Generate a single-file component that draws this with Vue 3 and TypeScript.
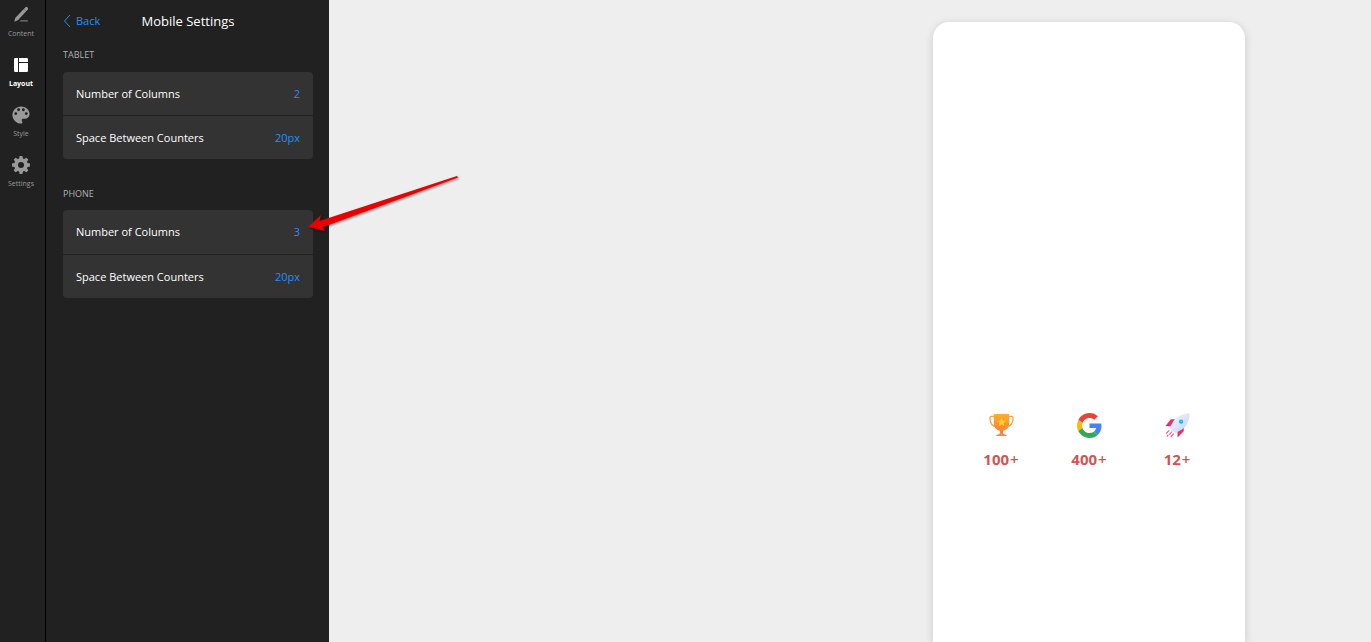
<script setup lang="ts">
import { ref } from 'vue'

type Icon = 'content' | 'layout' | 'style' | 'settings'
interface Tab { id: Icon; label: string }
interface Group { title: string; rows: { label: string; value: string }[] }
interface Counter { icon: 'trophy' | 'google' | 'rocket'; value: string; suffix: string }

const tabs: Tab[] = [
  { id: 'content', label: 'Content' },
  { id: 'layout', label: 'Layout' },
  { id: 'style', label: 'Style' },
  { id: 'settings', label: 'Settings' },
]
const active = ref<Icon>('layout')

const groups: Group[] = [
  {
    title: 'Tablet',
    rows: [
      { label: 'Number of Columns', value: '2' },
      { label: 'Space Between Counters', value: '20px' },
    ],
  },
  {
    title: 'Phone',
    rows: [
      { label: 'Number of Columns', value: '3' },
      { label: 'Space Between Counters', value: '20px' },
    ],
  },
]

const counters: Counter[] = [
  { icon: 'trophy', value: '100', suffix: '+' },
  { icon: 'google', value: '400', suffix: '+' },
  { icon: 'rocket', value: '12', suffix: '+' },
]
</script>

<template>
  <div class="editor">
    <nav class="rail" aria-label="Sections">
      <button
        v-for="tab in tabs"
        :key="tab.id"
        type="button"
        class="tab"
        :class="{ active: active === tab.id }"
        @click="active = tab.id"
      >
        <svg v-if="tab.id === 'content'" class="tab-icon" viewBox="0 0 20 20" aria-hidden="true">
          <path d="M3.400 16.800 4.200 13 12.800 4 15.200 6.200 6.900 15.300Z" />
          <path d="M12.800 4 14.300 2.500a1.600 1.600 0 0 1 2.400 2.200L15.200 6.200Z" />
          <path d="M9.800 15.200h7v1.400H8.300Z" opacity=".75" />
        </svg>
        <svg v-else-if="tab.id === 'layout'" class="tab-icon" viewBox="0 0 20 20" aria-hidden="true">
          <path d="M4.200 3H7V17H4.200A1.200 1.200 0 0 1 3 15.800V4.200A1.200 1.200 0 0 1 4.200 3Z" />
          <path d="M8 3H15.800A1.200 1.200 0 0 1 17 4.200V7H8Z" />
          <path d="M8 8H17V15.800A1.200 1.200 0 0 1 15.800 17H8Z" />
        </svg>
        <svg v-else-if="tab.id === 'style'" class="tab-icon" viewBox="1.500 1.500 21 21" aria-hidden="true">
          <path d="M12 3C7 3 3 7 3 12s4 9 9 9c.83 0 1.500-.67 1.500-1.500 0-.39-.15-.74-.39-1.010-.23-.26-.38-.61-.38-.99 0-.83.67-1.500 1.500-1.500H16c2.760 0 5-2.240 5-5 0-4.420-4-8-9-8zm-5.500 9c-.83 0-1.500-.67-1.500-1.500S5.670 9 6.500 9 8 9.670 8 10.500 7.330 12 6.500 12zm3-4C8.670 8 8 7.330 8 6.500S8.670 5 9.500 5s1.500.67 1.500 1.500S10.330 8 9.500 8zm5 0c-.83 0-1.500-.67-1.500-1.500S13.670 5 14.500 5s1.500.67 1.500 1.500S15.330 8 14.500 8zm3 4c-.83 0-1.500-.67-1.500-1.500S16.670 9 17.500 9s1.500.67 1.500 1.500-.67 1.500-1.500 1.500z" />
        </svg>
        <svg v-else class="tab-icon" viewBox="0 0 20 20" aria-hidden="true">
          <path fill-rule="evenodd" d="M8.600 1h2.800l.5 2.400 1.300.6L15.400 2.700l1.900 1.900L16 6.800l.6 1.300 2.400.5v2.800l-2.400.5-.6 1.300 1.300 2.200-1.900 1.900-2.200-1.300-1.300.6-.5 2.400H8.600l-.5-2.400L6.800 16l-2.200 1.300-1.900-1.900L4 13.200l-.6-1.300L1 11.400V8.600l2.400-.5L4 6.800 2.700 4.600l1.900-1.900L6.800 4l1.300-.6ZM10 7a3 3 0 1 0 0 6 3 3 0 0 0 0-6Z" />
        </svg>
        <span>{{ tab.label }}</span>
      </button>
    </nav>

    <aside class="panel">
      <header class="panel-head">
        <button type="button" class="back">
          <svg class="chevron" viewBox="0 0 8 14" aria-hidden="true"><path d="M7 1 1.500 7 7 13" /></svg>
          <span>Back</span>
        </button>
        <h1>Mobile Settings</h1>
      </header>
      <section v-for="group in groups" :key="group.title" class="group">
        <h2>{{ group.title }}</h2>
        <div class="card">
          <button v-for="row in group.rows" :key="row.label" type="button" class="row">
            <span>{{ row.label }}</span>
            <span class="value">{{ row.value }}</span>
          </button>
        </div>
      </section>
    </aside>

    <main class="preview">
      <div class="phone">
        <div v-for="counter in counters" :key="counter.icon" class="counter">
          <svg v-if="counter.icon === 'trophy'" class="counter-icon" viewBox="0 0 26 26" aria-hidden="true">
            <defs>
              <linearGradient id="cup" x1="0" y1="0" x2="0" y2="1">
                <stop offset="0" stop-color="#ffad27" /><stop offset="1" stop-color="#f47f3d" />
              </linearGradient>
            </defs>
            <path d="M6 3.500H2.500q-1.500 0-1.500 2C1 11 3 14 8.500 14.500M20 3.500h3.500q1.500 0 1.500 2c0 5.500-2 8.500-7.500 9" fill="none" stroke="#f7a04c" stroke-width="1.400" />
            <path d="M5 1h16v10c0 4-2.500 6.500-6 7.300L14.300 21h-2.600L11 18.300C7.500 17.500 5 15 5 11Z" fill="url(#cup)" />
            <path d="M11.700 20.500h2.600q.7 2 4.200 2.500v1h-11v-1q3.500-.5 4.200-2.500Z" fill="#f58a43" />
            <path d="m13 5 1.400 2.900 3.100.4-2.300 2.100.6 3.100L13 12l-2.800 1.500.6-3.100-2.300-2.100 3.100-.4Z" fill="#ffcc2f" />
          </svg>
          <svg v-else-if="counter.icon === 'google'" class="counter-icon" viewBox="0 0 48 48" aria-hidden="true">
            <path fill="#EA4335" d="M24 9.500c3.540 0 6.710 1.220 9.210 3.600l6.850-6.850C35.900 2.380 30.470 0 24 0 14.620 0 6.510 5.380 2.560 13.220l7.980 6.190C12.430 13.720 17.740 9.500 24 9.500z" />
            <path fill="#4285F4" d="M46.980 24.550c0-1.570-.15-3.090-.38-4.550H24v9.020h12.940c-.58 2.960-2.260 5.480-4.780 7.180l7.730 6c4.510-4.180 7.090-10.360 7.090-17.650z" />
            <path fill="#FBBC05" d="M10.530 28.590c-.48-1.450-.76-2.990-.76-4.590s.27-3.140.76-4.590l-7.980-6.190C.92 16.460 0 20.120 0 24c0 3.880.92 7.540 2.560 10.780l7.970-6.190z" />
            <path fill="#34A853" d="M24 48c6.480 0 11.930-2.130 15.890-5.810l-7.730-6c-2.150 1.450-4.920 2.300-8.160 2.300-6.260 0-11.570-4.220-13.470-9.910l-7.980 6.190C6.510 42.620 14.620 48 24 48z" />
          </svg>
          <svg v-else class="counter-icon" viewBox="0 0 26 26" aria-hidden="true">
            <defs>
              <linearGradient id="hull" x1="0" y1="0" x2="1" y2="1">
                <stop offset="0" stop-color="#f4f7ff" /><stop offset="1" stop-color="#c5d0fb" />
              </linearGradient>
            </defs>
            <path d="M11 6.500H6L.5 13.500 6 14ZM19.500 14.500V19L13 25.500V19Z" fill="#e0356a" />
            <path d="M25.500.5C19 .5 12.500 3 9 8L5 15Q6 20 11.500 20.500L18 17C23 13 25.500 7.500 25.500.5Z" fill="url(#hull)" />
            <circle cx="16.800" cy="9" r="2.200" fill="#28a9dc" />
            <circle cx="17.200" cy="8.600" r="1.100" fill="#5cc8ec" />
            <path d="M4.500 18 1 21.500M7 19.500l-2.500 3M9 21.500 6 25M3.500 22.500 2 24.500" stroke="#e8557f" stroke-width="1.100" fill="none" />
          </svg>
          <p class="count"><span>{{ counter.value }}</span><span class="suffix">{{ counter.suffix }}</span></p>
        </div>
      </div>
    </main>

    <svg class="pointer" viewBox="0 0 156 62" aria-hidden="true">
      <path d="M3 53 16 41 14.500 47 152 2 153 3.500 18 53 20 57Z" />
    </svg>
  </div>
</template>

<style>
body {
  margin: 0;
  background: #eee;
}
</style>

<style scoped>
.editor {
  position: relative;
  display: flex;
  min-height: 100vh;
  font-family: "Open Sans", "Noto Sans", sans-serif;
  background: #eee;
}
button {
  border: 0;
  margin: 0;
  padding: 0;
  background: none;
  font: inherit;
  color: inherit;
  cursor: pointer;
}
h1,
h2,
p {
  margin: 0;
  font-weight: 400;
}
.rail {
  flex: none;
  box-sizing: border-box;
  width: 46px;
  padding-top: 5px;
  display: flex;
  flex-direction: column;
  gap: 16px;
  background: #212121;
  border-right: 1px solid #000;
}
.tab {
  display: flex;
  flex-direction: column;
  align-items: center;
  gap: 4px;
  width: 42px;
  height: 34px;
  font-size: 7px;
  line-height: 10px;
  color: #999;
}
.tab.active {
  color: #fff;
  font-weight: 700;
}
.tab-icon {
  width: 20px;
  height: 20px;
  fill: currentColor;
}
.panel {
  flex: none;
  box-sizing: border-box;
  width: 283px;
  padding: 0 16px 0 17px;
  background: #212121;
  color: #fff;
}
.panel-head {
  display: grid;
  grid-template-columns: 1fr auto 1fr;
  align-items: center;
  height: 42px;
}
.back {
  justify-self: start;
  display: flex;
  align-items: center;
  gap: 5px;
  font-size: 11px;
  line-height: 18px;
  color: #1f8fff;
}
.chevron {
  width: 8px;
  height: 14px;
  fill: none;
  stroke: currentColor;
}
h1 {
  font-size: 13px;
  line-height: 18px;
}
h2 {
  padding: 6px 0 11px;
  font-size: 9px;
  line-height: 13px;
  text-transform: uppercase;
  color: #b0b0b0;
}
.group + .group {
  margin-top: 22px;
}
.group + .group h2 {
  padding-bottom: 10px;
}
.card {
  display: flex;
  flex-direction: column;
  gap: 1px;
  overflow: hidden;
  border-radius: 4px;
}
.row {
  display: flex;
  align-items: center;
  justify-content: space-between;
  min-height: 43px;
  padding: 0 13px;
  background: #333;
  font-size: 11px;
  line-height: 18px;
}
.group + .group .row:first-child {
  min-height: 44px;
}
.value {
  color: #1f8fff;
}
.preview {
  flex: 1;
  display: flex;
  justify-content: flex-end;
  padding: 22px 126px 0 0;
}
.phone {
  box-sizing: border-box;
  width: 312px;
  padding: 391px 34px 0;
  display: grid;
  grid-template-columns: repeat(3, 1fr);
  align-items: start;
  gap: 20px;
  border-radius: 16px 16px 0 0;
  background: #fff;
  box-shadow: 0 2px 8px rgba(0, 0, 0, 0.16);
}
.counter {
  display: flex;
  flex-direction: column;
  align-items: center;
  gap: 11px;
}
.counter-icon {
  width: 25px;
  height: 25px;
}
.count {
  display: flex;
  gap: 1px;
  font-size: 15px;
  line-height: 20px;
  font-weight: 700;
  color: #cf5555;
}
.suffix {
  font-weight: 600;
}
.pointer {
  position: absolute;
  left: 305px;
  top: 174px;
  width: 156px;
  height: 62px;
  fill: #e90000;
  filter: drop-shadow(1px 1px 1px rgba(0, 0, 0, 0.5));
  pointer-events: none;
}
</style>
